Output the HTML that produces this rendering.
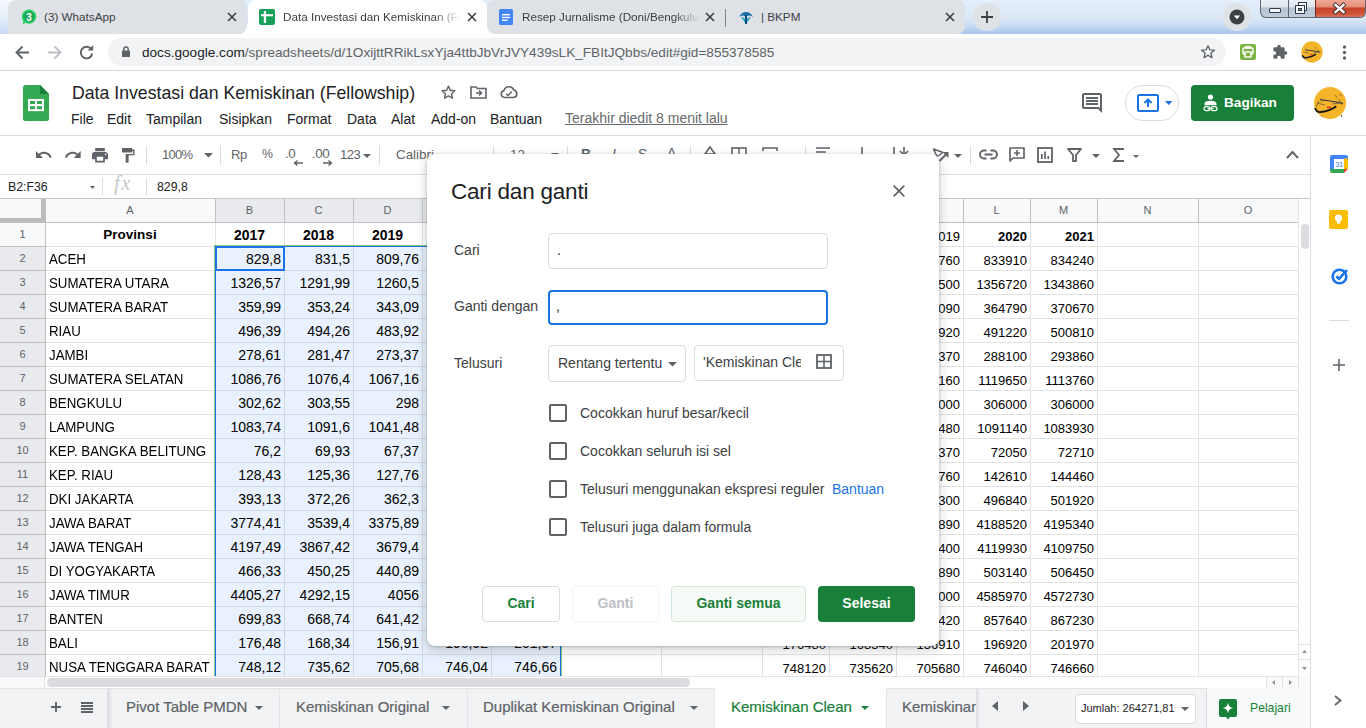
<!DOCTYPE html><html><head><meta charset="utf-8"><style>
*{box-sizing:border-box;margin:0;padding:0}
html,body{width:1366px;height:728px;overflow:hidden;background:#fff;font-family:"Liberation Sans", sans-serif;position:relative}
.a{position:absolute}
.t{position:absolute;white-space:nowrap}
svg{position:absolute;overflow:visible}
</style></head><body>
<div class="a" style="left:0;top:0;width:1366px;height:34px;background:linear-gradient(180deg,#e4eefa 0%,#dbe7f6 55%,#c9dbf3 75%,#a9c5ec 100%)"></div>
<div class="a" style="left:0;top:0;width:60px;height:34px;background:linear-gradient(180deg,#f6f9fd 0%,#e6eef8 50%,#c9dcf5 100%)"></div>
<div class="a" style="left:238px;top:24px;width:258px;height:10px;background:#fff"></div>
<div class="a" style="left:8px;top:0;width:239px;height:34px;background:#dee1e6;border-radius:8px 8px 8px 0"></div>
<div class="a" style="left:487px;top:0;width:478px;height:34px;background:#dee1e6;border-radius:8px"></div>
<div class="a" style="left:725px;top:9px;width:1px;height:18px;background:#80868b"></div>
<div class="a" style="left:248px;top:0;width:239px;height:34px;background:#fff;border-radius:8px 8px 0 0"></div>
<svg style="left:21px;top:9px" width="16" height="16" viewBox="0 0 16 16"><circle cx="8" cy="7.6" r="7.2" fill="#25d366"/><path d="M1.5 15.5 L2.6 11 L5 13.6Z" fill="#25d366"/><circle cx="8" cy="7.6" r="5.6" fill="#1fa855"/><text x="8" y="11.5" font-family="Liberation Sans" font-weight="bold" font-size="10" fill="#fff" text-anchor="middle">3</text></svg>
<div class="t" style="left:44px;top:10px;font-size:11.7px;color:#3c4043">(3) WhatsApp</div>
<svg style="left:227px;top:12px" width="10" height="10"><path d="M1 1L9 9M9 1L1 9" stroke="#3c4043" stroke-width="1.6"/></svg>
<svg style="left:259px;top:9px" width="16" height="16"><rect x="0" y="0" width="16" height="16" rx="2" fill="#15a05a"/><rect x="2" y="5.2" width="12" height="2.1" fill="#fff"/><rect x="4.8" y="2" width="2.3" height="12" fill="#fff"/></svg>
<div class="t" style="left:283px;top:10px;width:177px;overflow:hidden;font-size:11.7px;color:#3c4043;-webkit-mask-image:linear-gradient(90deg,#000 85%,transparent)">Data Investasi dan Kemiskinan (Fellowship)</div>
<svg style="left:467px;top:12px" width="10" height="10"><path d="M1 1L9 9M9 1L1 9" stroke="#3c4043" stroke-width="1.6"/></svg>
<svg style="left:498px;top:9px" width="16" height="16"><rect x="1" y="0" width="14" height="16" rx="1.5" fill="#4285f4"/><rect x="4" y="5" width="8" height="1.4" fill="#fff"/><rect x="4" y="7.8" width="8" height="1.4" fill="#fff"/><rect x="4" y="10.6" width="5.5" height="1.4" fill="#fff"/></svg>
<div class="t" style="left:522px;top:10px;width:178px;overflow:hidden;font-size:11.7px;color:#3c4043;-webkit-mask-image:linear-gradient(90deg,#000 85%,transparent)">Resep Jurnalisme (Doni/Bengkulu)</div>
<svg style="left:705px;top:12px" width="10" height="10"><path d="M1 1L9 9M9 1L1 9" stroke="#3c4043" stroke-width="1.6"/></svg>
<svg style="left:738px;top:9px" width="16" height="16"><path d="M8 3C5 3 2 5 1 8C4 6 6 6 8 8C10 6 12 6 15 8C14 5 11 3 8 3Z" fill="#1b6fa8"/><path d="M3 8C5 8 7 9 8 12C9 9 11 8 13 8L8 15Z" fill="#24a0c4"/><rect x="7" y="6" width="2" height="9" fill="#0d4f80"/></svg>
<div class="t" style="left:761px;top:10px;font-size:11.7px;color:#3c4043">| BKPM</div>
<svg style="left:945px;top:12px" width="10" height="10"><path d="M1 1L9 9M9 1L1 9" stroke="#3c4043" stroke-width="1.6"/></svg>
<div class="a" style="left:973px;top:3px;width:28px;height:28px;border-radius:14px;background:#dee1e6"></div>
<svg style="left:980px;top:10px" width="14" height="14"><path d="M7 1V13M1 7H13" stroke="#3c4043" stroke-width="1.8"/></svg>
<div class="a" style="left:1223px;top:3px;width:28px;height:28px;border-radius:14px;background:#dee1e6"></div>
<svg style="left:1229px;top:9px" width="16" height="16"><circle cx="8" cy="8" r="7.5" fill="#3c4043"/><path d="M4.8 6.5H11.2L8 10.3Z" fill="#fff"/></svg>
<div class="a" style="left:1260px;top:-2px;width:106px;height:19.5px;border:1px solid #5b6778;border-top:none;border-radius:0 0 6px 6px;background:linear-gradient(#eef2f7 0%,#e1e7ef 45%,#b9c3d2 52%,#c3ccd9 100%);overflow:hidden">
<div class="a" style="left:27px;top:0;width:1px;height:20px;background:#5b6778"></div>
<div class="a" style="left:54px;top:0;width:51px;height:20px;border-left:1px solid #6a2a1c;background:linear-gradient(#f2ad9d 0%,#e5907b 42%,#c8452b 52%,#cf553a 80%,#e0826b 100%)"></div>
</div>
<div class="a" style="left:1269px;top:8px;width:12px;height:5px;background:#f4f6f9;border:1px solid #2f3a4a;border-radius:1px"></div>
<div class="a" style="left:1298px;top:2px;width:9px;height:9px;border:1px solid #2f3a4a;background:#f4f6f9"></div>
<div class="a" style="left:1295px;top:4.5px;width:9.5px;height:9px;border:1px solid #2f3a4a;background:#f4f6f9"></div>
<div class="a" style="left:1298px;top:7.5px;width:3.5px;height:3.5px;border:1px solid #2f3a4a;background:#9aa5b5"></div>
<svg style="left:1333px;top:3px" width="13" height="11"><path d="M2.5 2L10.5 9M10.5 2L2.5 9" stroke="#3b2a2a" stroke-width="4.2" stroke-linecap="square"/><path d="M2.5 2L10.5 9M10.5 2L2.5 9" stroke="#fff" stroke-width="2.4" stroke-linecap="square"/></svg>
<div class="a" style="left:0;top:34px;width:1366px;height:36px;background:#fff"></div>
<div class="a" style="left:0;top:70px;width:1366px;height:1px;background:#d6d8db"></div>
<svg style="left:15px;top:45px" width="15" height="15"><path d="M14 7.5H2M7.5 1.5L1.5 7.5L7.5 13.5" stroke="#5f6368" stroke-width="1.9" fill="none"/></svg>
<svg style="left:47px;top:45px" width="15" height="15"><path d="M1 7.5H13M7.5 1.5L13.5 7.5L7.5 13.5" stroke="#bdc1c6" stroke-width="1.9" fill="none"/></svg>
<svg style="left:79px;top:45px" width="15" height="15"><path d="M12.3 4.2A5.8 5.8 0 1 0 13.3 8.5" stroke="#5f6368" stroke-width="1.9" fill="none"/><path d="M8.6 5.6H14.2V0Z" fill="#5f6368"/></svg>
<div class="a" style="left:108px;top:38px;width:1118px;height:28px;border-radius:14px;background:#f1f3f4"></div>
<svg style="left:122px;top:46px" width="8" height="11" viewBox="0 0 8 11"><path d="M1.8 5V3.2A2.2 2.2 0 0 1 6.2 3.2V5" stroke="#5f6368" stroke-width="1.5" fill="none"/><rect x="0" y="4.5" width="8" height="6.5" rx="0.6" fill="#5f6368"/></svg>
<div class="t" style="left:142px;top:45px;font-size:13.6px;color:#5f6368;letter-spacing:0px"><span style="color:#202124">docs.google.com</span>/spreadsheets/d/1OxijttRRikLsxYja4ttbJbVrJVY439sLK_FBItJQbbs/edit#gid=855378585</div>
<svg style="left:1200px;top:44px" width="16" height="16" viewBox="0 0 24 24"><path d="M12 2.5l2.8 6.2 6.7.6-5.1 4.5 1.5 6.6L12 16.9l-5.9 3.5 1.5-6.6-5.1-4.5 6.7-.6z" stroke="#5f6368" stroke-width="2" fill="none" stroke-linejoin="round"/></svg>
<svg style="left:1240px;top:44px" width="16" height="16"><rect width="16" height="16" rx="2" fill="#7cb342"/><rect x="3" y="4" width="10" height="6" rx="1" fill="none" stroke="#fff" stroke-width="1.4"/><rect x="5" y="8" width="6" height="5" fill="#7cb342" stroke="#fff" stroke-width="1.4"/><rect x="5" y="2" width="6" height="2.5" fill="#fff"/></svg>
<svg style="left:1272px;top:44px" width="16" height="16" viewBox="0 0 24 24"><path d="M20.5 11H19V7c0-1.1-.9-2-2-2h-4V3.5C13 2.12 11.88 1 10.5 1S8 2.12 8 3.5V5H4c-1.1 0-1.99.9-1.99 2v3.8H3.5c1.49 0 2.7 1.21 2.7 2.7s-1.21 2.7-2.7 2.7H2V20c0 1.1.9 2 2 2h3.8v-1.5c0-1.49 1.21-2.7 2.7-2.7 1.49 0 2.7 1.21 2.7 2.7V22H17c1.1 0 2-.9 2-2v-4h1.5c1.38 0 2.5-1.12 2.5-2.5S21.88 11 20.5 11z" fill="#5f6368"/></svg>
<svg style="left:1301px;top:41px" width="22" height="22" viewBox="0 0 34 34"><circle cx="17" cy="17" r="16.5" fill="#f5b52b"/><path d="M2 22C3 25 5 26.5 8 26C13 25.5 18 24 23.3 20.2" stroke="#111" stroke-width="2.2" fill="none"/><path d="M7 13.5C9 14 13 14.5 17 15C21 15.5 25 16.5 30 17.3" stroke="#3a3a4a" stroke-width="1.5" fill="none"/><path d="M7 12L9 16M4 17L12 19M19 18L27 17M26 13L29 19M22 9L24 12" stroke="#6b5a3a" stroke-width="1" fill="none"/><path d="M14 21.4H18" stroke="#d9261c" stroke-width="1.8"/></svg>
<svg style="left:1342px;top:45px" width="5" height="15"><circle cx="2.5" cy="2" r="1.7" fill="#5f6368"/><circle cx="2.5" cy="7.5" r="1.7" fill="#5f6368"/><circle cx="2.5" cy="13" r="1.7" fill="#5f6368"/></svg>
<svg style="left:23px;top:85px" width="26" height="36" viewBox="0 0 26 36"><path d="M2.5 0H17L26 9V33.5A2.5 2.5 0 0 1 23.5 36H2.5A2.5 2.5 0 0 1 0 33.5V2.5A2.5 2.5 0 0 1 2.5 0Z" fill="#34a853"/><path d="M17 0V9H26Z" fill="#188038"/><rect x="5" y="14" width="16" height="12.2" fill="#fff"/><rect x="7" y="16" width="5" height="3" fill="#34a853"/><rect x="14" y="16" width="5" height="3" fill="#34a853"/><rect x="7" y="21.2" width="5" height="3" fill="#34a853"/><rect x="14" y="21.2" width="5" height="3" fill="#34a853"/></svg>
<div class="t" style="left:72px;top:83px;font-size:17.7px;color:#202124">Data Investasi dan Kemiskinan (Fellowship)</div>
<svg style="left:440px;top:84px" width="17" height="17" viewBox="0 0 24 24"><path d="M12 3l2.6 5.9 6.4.6-4.8 4.3 1.4 6.3L12 16.8 6.4 20.1l1.4-6.3L3 9.5l6.4-.6z" stroke="#5f6368" stroke-width="2" fill="none" stroke-linejoin="round"/></svg>
<svg style="left:470px;top:85px" width="17" height="14" viewBox="0 0 17 14"><path d="M1 2H6L7.5 3.5H16V13H1Z" stroke="#5f6368" stroke-width="1.6" fill="none"/><path d="M6 8H11.5M9 5.5L11.5 8L9 10.5" stroke="#5f6368" stroke-width="1.5" fill="none"/></svg>
<svg style="left:500px;top:85px" width="18" height="14" viewBox="0 0 18 14"><path d="M4.5 12.5A3.5 3.5 0 0 1 4 5.6 5.2 5.2 0 0 1 13.8 5 3.8 3.8 0 0 1 13.5 12.5Z" stroke="#5f6368" stroke-width="1.6" fill="none"/><path d="M6 8.8L8 10.5L12 6.5" stroke="#5f6368" stroke-width="1.5" fill="none"/></svg>
<div class="t" style="left:71px;top:111px;font-size:14px;color:#202124">File</div>
<div class="t" style="left:107px;top:111px;font-size:14px;color:#202124">Edit</div>
<div class="t" style="left:146px;top:111px;font-size:14px;color:#202124">Tampilan</div>
<div class="t" style="left:219px;top:111px;font-size:14px;color:#202124">Sisipkan</div>
<div class="t" style="left:287px;top:111px;font-size:14px;color:#202124">Format</div>
<div class="t" style="left:347px;top:111px;font-size:14px;color:#202124">Data</div>
<div class="t" style="left:391px;top:111px;font-size:14px;color:#202124">Alat</div>
<div class="t" style="left:431px;top:111px;font-size:14px;color:#202124">Add-on</div>
<div class="t" style="left:490px;top:111px;font-size:14px;color:#202124">Bantuan</div>
<div class="t" style="left:565px;top:110px;font-size:14px;color:#666a6e;text-decoration:underline">Terakhir diedit 8 menit lalu</div>
<svg style="left:1082px;top:93px" width="20" height="20" viewBox="2 2 20 20"><path d="M21.99 4c0-1.1-.89-2-1.99-2H4c-1.1 0-2 .9-2 2v12c0 1.1.9 2 2 2h14l4 4-.01-18zM20 4v13.17L18.83 16H4V4h16zM6 12h12v2H6zm0-3h12v2H6zm0-3h12v2H6z" fill="#5f6368"/></svg>
<div class="a" style="left:1125px;top:85px;width:54px;height:36px;border:1px solid #dadce0;border-radius:18px;background:#fff"></div>
<svg style="left:1137px;top:94px" width="22" height="18"><rect x="1" y="1" width="20" height="16" rx="1" fill="none" stroke="#1a73e8" stroke-width="2"/><path d="M11 13V6M7.5 9L11 5.5L14.5 9" stroke="#1a73e8" stroke-width="2" fill="none"/></svg>
<svg style="left:1164.5px;top:101px" width="7.5" height="4"><path d="M0 0H7.5L3.75 4Z" fill="#1a73e8"/></svg>
<div class="a" style="left:1191px;top:85px;width:103px;height:36px;border-radius:4px;background:#188038"></div>
<svg style="left:1203px;top:94px" width="15" height="18" viewBox="0 0 15 18"><circle cx="7.5" cy="3" r="2.6" fill="#fff"/><path d="M1.5 11.2V9.8C1.5 7.5 5 6.8 7.5 6.8S13.5 7.5 13.5 9.8V11.2Z" fill="#fff"/><rect x="1" y="12.6" width="6" height="4" rx="2" fill="none" stroke="#fff" stroke-width="1.2"/><rect x="8" y="12.6" width="6" height="4" rx="2" fill="none" stroke="#fff" stroke-width="1.2"/><path d="M4.5 14.6H10.5" stroke="#fff" stroke-width="1.2"/></svg>
<div class="t" style="left:1224px;top:95px;font-size:13.6px;font-weight:bold;color:#fff">Bagikan</div>
<svg style="left:1313px;top:86px" width="34" height="34" viewBox="0 0 34 34"><circle cx="17" cy="17" r="16" fill="#f5b52b"/><path d="M2 22C3 25 5 26.5 8 26C13 25.5 18 24 23.3 20.2" stroke="#111" stroke-width="1.9" fill="none"/><path d="M7 13.5C9 14 13 14.5 17 15C21 15.5 25 16.5 30 17.3" stroke="#3a3a4a" stroke-width="1.2" fill="none"/><path d="M7 12L9 16M4 17L12 19M19 18L27 17M26 13L29 19M22 9L24 12M27 8L28 10M6 15L3 21" stroke="#6b5a3a" stroke-width="0.8" fill="none"/><path d="M14 21.4H18" stroke="#d9261c" stroke-width="1.5"/><circle cx="28.5" cy="30" r="0.7" fill="#222"/><circle cx="9" cy="30.5" r="0.6" fill="#c33"/></svg>
<div class="a" style="left:0;top:135px;width:1366px;height:1px;background:#dadce0"></div>
<div class="a" style="left:0;top:174px;width:1310px;height:1px;background:#dadce0"></div>
<div class="a" style="left:1310px;top:135px;width:1px;height:593px;background:#dadce0"></div>
<svg style="left:36px;top:151px" width="15.4" height="6.9" viewBox="2 7 20.1 9"><path d="M12.5 8c-2.65 0-5.05.99-6.9 2.6L2 7v9h9l-3.62-3.62c1.39-1.16 3.16-1.88 5.12-1.88 3.54 0 6.55 2.31 7.6 5.5l2.37-.78C21.08 11.03 17.15 8 12.5 8z" fill="#5f6368"/></svg>
<svg style="left:64.5px;top:151px" width="15.7" height="6.9" viewBox="1.54 7 20.46 9"><path d="M18.4 10.6C16.55 8.99 14.15 8 11.5 8c-4.65 0-8.58 3.03-9.960 7.22L3.9 16c1.05-3.19 4.05-5.5 7.6-5.5 1.95 0 3.73.72 5.12 1.88L13 16h9V7l-3.6 3.6z" fill="#5f6368"/></svg>
<svg style="left:92px;top:147.6px" width="16" height="14.4" viewBox="2 3 20 18"><path d="M19 8H5c-1.66 0-3 1.34-3 3v6h4v4h12v-4h4v-6c0-1.66-1.340-3-3-3zm-3 11H8v-5h8v5zm3-7c-.55 0-1-.45-1-1s.45-1 1-1 1 .45 1 1-.45 1-1 1zm-1-9H6v4h12V3z" fill="#5f6368"/></svg>
<svg style="left:122px;top:147.5px" width="12.5" height="14.7" viewBox="4 2 17 20"><path d="M18 4V3c0-.55-.45-1-1-1H5c-.55 0-1 .45-1 1v4c0 .55.45 1 1 1h12c.55 0 1-.45 1-1V6h1v4H9v11c0 .55.45 1 1 1h2c.55 0 1-.45 1-1v-9h8V4h-3z" fill="#5f6368"/></svg>
<div class="a" style="left:146px;top:146px;width:1px;height:19px;background:#dadce0"></div>
<div class="a" style="left:220px;top:146px;width:1px;height:19px;background:#dadce0"></div>
<div class="a" style="left:379px;top:146px;width:1px;height:19px;background:#dadce0"></div>
<div class="a" style="left:493px;top:146px;width:1px;height:19px;background:#dadce0"></div>
<div class="a" style="left:567px;top:146px;width:1px;height:19px;background:#dadce0"></div>
<div class="a" style="left:690px;top:146px;width:1px;height:19px;background:#dadce0"></div>
<div class="a" style="left:805px;top:146px;width:1px;height:19px;background:#dadce0"></div>
<div class="a" style="left:970px;top:146px;width:1px;height:19px;background:#dadce0"></div>
<div class="t" style="left:162px;top:147px;font-size:13px;letter-spacing:-0.7px;color:#5f6368">100%</div>
<svg style="left:204px;top:153px" width="9" height="5"><path d="M0 0H9L4.5 4.5Z" fill="#5f6368"/></svg>
<div class="t" style="left:231px;top:147px;font-size:13px;letter-spacing:-0.3px;color:#5f6368">Rp</div>
<div class="t" style="left:262px;top:147px;font-size:12.3px;color:#5f6368">%</div>
<div class="t" style="left:285px;top:146px;font-size:13.4px;color:#5f6368;letter-spacing:-0.5px">.0</div>
<svg style="left:293px;top:160px" width="10" height="6"><path d="M10 3H2M4.5 0.5L1.5 3L4.5 5.5" stroke="#5f6368" stroke-width="1.4" fill="none"/></svg>
<div class="t" style="left:312px;top:146px;font-size:13.4px;color:#5f6368;letter-spacing:-0.5px">.00</div>
<svg style="left:323px;top:160px" width="10" height="6"><path d="M0 3H8M5.5 0.5L8.5 3L5.5 5.5" stroke="#5f6368" stroke-width="1.4" fill="none"/></svg>
<div class="t" style="left:340px;top:147px;font-size:13px;letter-spacing:-0.5px;color:#5f6368">123</div>
<svg style="left:363px;top:154px" width="8" height="4"><path d="M0 0H8L4 4Z" fill="#5f6368"/></svg>
<div class="t" style="left:396px;top:147px;font-size:13.4px;color:#5f6368">Calibri</div>
<div class="t" style="left:510px;top:147px;font-size:13.4px;color:#5f6368">12</div>
<svg style="left:551px;top:153px" width="8" height="4"><path d="M0 0H8L4 4Z" fill="#5f6368"/></svg>
<div class="t" style="left:581px;top:146px;font-size:14px;font-weight:bold;color:#5f6368">B</div>
<div class="t" style="left:612px;top:146px;font-size:14px;font-style:italic;color:#5f6368">I</div>
<div class="t" style="left:638px;top:146px;font-size:14px;color:#5f6368;text-decoration:line-through">S</div>
<div class="t" style="left:667px;top:145px;font-size:14px;color:#5f6368">A</div>
<svg style="left:931px;top:147px" width="20" height="16" viewBox="0 0 20 16"><path d="M2.5 2L12 5.5L6 9.5Z" stroke="#5f6368" stroke-width="1.5" fill="none" stroke-linejoin="round"/><path d="M8.5 14L15.5 7" stroke="#5f6368" stroke-width="1.9"/><path d="M11.5 5H17.5V11Z" fill="#5f6368"/></svg>
<svg style="left:954px;top:154px" width="8" height="4"><path d="M0 0H8L4 4Z" fill="#5f6368"/></svg>
<svg style="left:979px;top:149px" width="19" height="11" viewBox="0 0 19 11"><path d="M7.5 1.5H5A4 4 0 0 0 5 9.5H7.5M11.5 1.5H14A4 4 0 0 1 14 9.5H11.5M5.5 5.5H13.5" stroke="#5f6368" stroke-width="1.9" fill="none"/></svg>
<svg style="left:1009px;top:147px" width="16" height="15" viewBox="0 0 16 15"><path d="M1 1H15V11H4L1 14Z" stroke="#5f6368" stroke-width="1.7" fill="none" stroke-linejoin="round"/><path d="M8 3V9M5 6H11" stroke="#5f6368" stroke-width="1.6"/></svg>
<svg style="left:1037px;top:147px" width="16" height="16" viewBox="0 0 16 16"><rect x="1" y="1" width="14" height="14" stroke="#5f6368" stroke-width="1.8" fill="none"/><path d="M4.8 12V7M8 12V4.5M11.2 12V9" stroke="#5f6368" stroke-width="1.7"/></svg>
<svg style="left:1067px;top:148px" width="15" height="14" viewBox="0 0 15 14"><path d="M1 1H14L9 7V13H6V7Z" stroke="#5f6368" stroke-width="1.8" fill="none" stroke-linejoin="round"/></svg>
<svg style="left:1092px;top:154px" width="8" height="4"><path d="M0 0H8L4 4Z" fill="#5f6368"/></svg>
<svg style="left:1113px;top:148px" width="11" height="14" viewBox="0 0 11 14"><path d="M11 1H1L6 7L1 13H11" stroke="#5f6368" stroke-width="1.8" fill="none"/></svg>
<svg style="left:1133px;top:155px" width="6" height="3"><path d="M0 0H6L3 3Z" fill="#5f6368"/></svg>
<svg style="left:1286px;top:150px" width="13" height="9" viewBox="0 0 13 9"><path d="M1 8L6.5 2L12 8" stroke="#5f6368" stroke-width="2" fill="none"/></svg>
<svg style="left:703px;top:146px" width="14" height="16"><path d="M7 1L12 8H2Z" stroke="#5f6368" stroke-width="1.6" fill="none"/></svg>
<svg style="left:731px;top:147px" width="16" height="16"><rect x="1" y="1" width="14" height="14" stroke="#5f6368" stroke-width="1.6" fill="none"/><path d="M8 1V15M1 8H15" stroke="#5f6368" stroke-width="1.4"/></svg>
<svg style="left:762px;top:147px" width="16" height="16"><path d="M1 4V1H15V4M1 12V15H15V12" stroke="#5f6368" stroke-width="1.6" fill="none"/><path d="M1 8H15" stroke="#5f6368" stroke-width="1.4" stroke-dasharray="2 2"/></svg>
<svg style="left:815px;top:147px" width="16" height="14"><path d="M1 1H15M1 5H11M1 9H15" stroke="#5f6368" stroke-width="1.6"/></svg>
<svg style="left:859px;top:146px" width="6" height="16"><path d="M3 1V13" stroke="#5f6368" stroke-width="1.6"/></svg>
<svg style="left:892px;top:146px" width="16" height="16"><path d="M2 1V13M12 1V9M8 5L12 9L16 5" stroke="#5f6368" stroke-width="1.6" fill="none"/></svg>
<div class="a" style="left:0;top:175px;width:1310px;height:23px;background:#fff"></div>
<div class="t" style="left:8px;top:180px;font-size:12.3px;color:#202124">B2:F36</div>
<svg style="left:90px;top:186px" width="5" height="3"><path d="M0 0H5L2.5 3Z" fill="#5f6368"/></svg>
<div class="a" style="left:102px;top:178px;width:1px;height:17px;background:#dadce0"></div>
<div class="a" style="left:146px;top:178px;width:1px;height:17px;background:#dadce0"></div>
<div class="t" style="left:114px;top:172px;font-size:20.5px;font-style:italic;font-family:'Liberation Serif',serif;letter-spacing:1.5px;color:#c4c7c9">fx</div>
<div class="t" style="left:157px;top:180px;font-size:12.3px;color:#202124">829,8</div>
<div class="a" style="left:0;top:198px;width:1310px;height:1px;background:#c7c7c7"></div>
<div class="a" style="left:0;top:199px;width:1298px;height:23px;background:#f8f9fa"></div>
<div class="a" style="left:215px;top:199px;width:345px;height:23px;background:#e8eaed"></div>
<div class="a" style="left:0;top:223px;width:45px;height:453px;background:#f8f9fa"></div>
<div class="a" style="left:0;top:247px;width:45px;height:429px;background:#e8eaed"></div>
<div class="a" style="left:45px;top:222px;width:1253px;height:1px;background:#e2e3e3"></div>
<div class="a" style="left:0;top:222px;width:45px;height:1px;background:#c0c0c0"></div>
<div class="a" style="left:45px;top:246px;width:1253px;height:1px;background:#e2e3e3"></div>
<div class="a" style="left:0;top:246px;width:45px;height:1px;background:#c0c0c0"></div>
<div class="a" style="left:45px;top:270px;width:1253px;height:1px;background:#e2e3e3"></div>
<div class="a" style="left:0;top:270px;width:45px;height:1px;background:#c0c0c0"></div>
<div class="a" style="left:45px;top:294px;width:1253px;height:1px;background:#e2e3e3"></div>
<div class="a" style="left:0;top:294px;width:45px;height:1px;background:#c0c0c0"></div>
<div class="a" style="left:45px;top:318px;width:1253px;height:1px;background:#e2e3e3"></div>
<div class="a" style="left:0;top:318px;width:45px;height:1px;background:#c0c0c0"></div>
<div class="a" style="left:45px;top:342px;width:1253px;height:1px;background:#e2e3e3"></div>
<div class="a" style="left:0;top:342px;width:45px;height:1px;background:#c0c0c0"></div>
<div class="a" style="left:45px;top:366px;width:1253px;height:1px;background:#e2e3e3"></div>
<div class="a" style="left:0;top:366px;width:45px;height:1px;background:#c0c0c0"></div>
<div class="a" style="left:45px;top:390px;width:1253px;height:1px;background:#e2e3e3"></div>
<div class="a" style="left:0;top:390px;width:45px;height:1px;background:#c0c0c0"></div>
<div class="a" style="left:45px;top:414px;width:1253px;height:1px;background:#e2e3e3"></div>
<div class="a" style="left:0;top:414px;width:45px;height:1px;background:#c0c0c0"></div>
<div class="a" style="left:45px;top:438px;width:1253px;height:1px;background:#e2e3e3"></div>
<div class="a" style="left:0;top:438px;width:45px;height:1px;background:#c0c0c0"></div>
<div class="a" style="left:45px;top:462px;width:1253px;height:1px;background:#e2e3e3"></div>
<div class="a" style="left:0;top:462px;width:45px;height:1px;background:#c0c0c0"></div>
<div class="a" style="left:45px;top:486px;width:1253px;height:1px;background:#e2e3e3"></div>
<div class="a" style="left:0;top:486px;width:45px;height:1px;background:#c0c0c0"></div>
<div class="a" style="left:45px;top:510px;width:1253px;height:1px;background:#e2e3e3"></div>
<div class="a" style="left:0;top:510px;width:45px;height:1px;background:#c0c0c0"></div>
<div class="a" style="left:45px;top:534px;width:1253px;height:1px;background:#e2e3e3"></div>
<div class="a" style="left:0;top:534px;width:45px;height:1px;background:#c0c0c0"></div>
<div class="a" style="left:45px;top:558px;width:1253px;height:1px;background:#e2e3e3"></div>
<div class="a" style="left:0;top:558px;width:45px;height:1px;background:#c0c0c0"></div>
<div class="a" style="left:45px;top:582px;width:1253px;height:1px;background:#e2e3e3"></div>
<div class="a" style="left:0;top:582px;width:45px;height:1px;background:#c0c0c0"></div>
<div class="a" style="left:45px;top:606px;width:1253px;height:1px;background:#e2e3e3"></div>
<div class="a" style="left:0;top:606px;width:45px;height:1px;background:#c0c0c0"></div>
<div class="a" style="left:45px;top:630px;width:1253px;height:1px;background:#e2e3e3"></div>
<div class="a" style="left:0;top:630px;width:45px;height:1px;background:#c0c0c0"></div>
<div class="a" style="left:45px;top:654px;width:1253px;height:1px;background:#e2e3e3"></div>
<div class="a" style="left:0;top:654px;width:45px;height:1px;background:#c0c0c0"></div>
<div class="a" style="left:45px;top:222px;width:1253px;height:1px;background:#c0c0c0"></div>
<div class="a" style="left:0;top:676px;width:1298px;height:1px;background:#e2e3e3"></div>
<div class="a" style="left:215px;top:223px;width:1px;height:453px;background:#e2e3e3"></div>
<div class="a" style="left:215px;top:199px;width:1px;height:23px;background:#c0c0c0"></div>
<div class="a" style="left:284px;top:223px;width:1px;height:453px;background:#e2e3e3"></div>
<div class="a" style="left:284px;top:199px;width:1px;height:23px;background:#c0c0c0"></div>
<div class="a" style="left:353px;top:223px;width:1px;height:453px;background:#e2e3e3"></div>
<div class="a" style="left:353px;top:199px;width:1px;height:23px;background:#c0c0c0"></div>
<div class="a" style="left:422px;top:223px;width:1px;height:453px;background:#e2e3e3"></div>
<div class="a" style="left:422px;top:199px;width:1px;height:23px;background:#c0c0c0"></div>
<div class="a" style="left:491px;top:223px;width:1px;height:453px;background:#e2e3e3"></div>
<div class="a" style="left:491px;top:199px;width:1px;height:23px;background:#c0c0c0"></div>
<div class="a" style="left:560px;top:223px;width:1px;height:453px;background:#e2e3e3"></div>
<div class="a" style="left:560px;top:199px;width:1px;height:23px;background:#c0c0c0"></div>
<div class="a" style="left:661px;top:223px;width:1px;height:453px;background:#e2e3e3"></div>
<div class="a" style="left:661px;top:199px;width:1px;height:23px;background:#c0c0c0"></div>
<div class="a" style="left:762px;top:223px;width:1px;height:453px;background:#e2e3e3"></div>
<div class="a" style="left:762px;top:199px;width:1px;height:23px;background:#c0c0c0"></div>
<div class="a" style="left:829px;top:223px;width:1px;height:453px;background:#e2e3e3"></div>
<div class="a" style="left:829px;top:199px;width:1px;height:23px;background:#c0c0c0"></div>
<div class="a" style="left:896px;top:223px;width:1px;height:453px;background:#e2e3e3"></div>
<div class="a" style="left:896px;top:199px;width:1px;height:23px;background:#c0c0c0"></div>
<div class="a" style="left:963px;top:223px;width:1px;height:453px;background:#e2e3e3"></div>
<div class="a" style="left:963px;top:199px;width:1px;height:23px;background:#c0c0c0"></div>
<div class="a" style="left:1030px;top:223px;width:1px;height:453px;background:#e2e3e3"></div>
<div class="a" style="left:1030px;top:199px;width:1px;height:23px;background:#c0c0c0"></div>
<div class="a" style="left:1097px;top:223px;width:1px;height:453px;background:#e2e3e3"></div>
<div class="a" style="left:1097px;top:199px;width:1px;height:23px;background:#c0c0c0"></div>
<div class="a" style="left:1198px;top:223px;width:1px;height:453px;background:#e2e3e3"></div>
<div class="a" style="left:1198px;top:199px;width:1px;height:23px;background:#c0c0c0"></div>
<div class="a" style="left:1298px;top:223px;width:1px;height:453px;background:#e2e3e3"></div>
<div class="a" style="left:1298px;top:199px;width:1px;height:23px;background:#c0c0c0"></div>
<div class="a" style="left:45px;top:199px;width:1px;height:477px;background:#c0c0c0"></div>
<div class="a" style="left:215px;top:246px;width:345px;height:430px;background:rgba(26,115,232,0.1)"></div>
<div class="a" style="left:41px;top:199px;width:4px;height:23px;background:#bdbdbd"></div>
<div class="a" style="left:0;top:218px;width:45px;height:4px;background:#bdbdbd"></div>
<div class="t" style="left:45px;top:204px;width:170px;text-align:center;font-size:11px;color:#5f6368">A</div>
<div class="t" style="left:215px;top:204px;width:69px;text-align:center;font-size:11px;color:#5f6368">B</div>
<div class="t" style="left:284px;top:204px;width:69px;text-align:center;font-size:11px;color:#5f6368">C</div>
<div class="t" style="left:353px;top:204px;width:69px;text-align:center;font-size:11px;color:#5f6368">D</div>
<div class="t" style="left:422px;top:204px;width:69px;text-align:center;font-size:11px;color:#5f6368">E</div>
<div class="t" style="left:491px;top:204px;width:69px;text-align:center;font-size:11px;color:#5f6368">F</div>
<div class="t" style="left:560px;top:204px;width:101px;text-align:center;font-size:11px;color:#5f6368">G</div>
<div class="t" style="left:661px;top:204px;width:101px;text-align:center;font-size:11px;color:#5f6368">H</div>
<div class="t" style="left:762px;top:204px;width:67px;text-align:center;font-size:11px;color:#5f6368">I</div>
<div class="t" style="left:829px;top:204px;width:67px;text-align:center;font-size:11px;color:#5f6368">J</div>
<div class="t" style="left:896px;top:204px;width:67px;text-align:center;font-size:11px;color:#5f6368">K</div>
<div class="t" style="left:963px;top:204px;width:67px;text-align:center;font-size:11px;color:#5f6368">L</div>
<div class="t" style="left:1030px;top:204px;width:67px;text-align:center;font-size:11px;color:#5f6368">M</div>
<div class="t" style="left:1097px;top:204px;width:101px;text-align:center;font-size:11px;color:#5f6368">N</div>
<div class="t" style="left:1198px;top:204px;width:100px;text-align:center;font-size:11px;color:#5f6368">O</div>
<div class="t" style="left:0;top:228px;width:45px;text-align:center;font-size:11px;color:#5f6368">1</div>
<div class="t" style="left:0;top:252px;width:45px;text-align:center;font-size:11px;color:#5f6368">2</div>
<div class="t" style="left:0;top:276px;width:45px;text-align:center;font-size:11px;color:#5f6368">3</div>
<div class="t" style="left:0;top:300px;width:45px;text-align:center;font-size:11px;color:#5f6368">4</div>
<div class="t" style="left:0;top:324px;width:45px;text-align:center;font-size:11px;color:#5f6368">5</div>
<div class="t" style="left:0;top:348px;width:45px;text-align:center;font-size:11px;color:#5f6368">6</div>
<div class="t" style="left:0;top:372px;width:45px;text-align:center;font-size:11px;color:#5f6368">7</div>
<div class="t" style="left:0;top:396px;width:45px;text-align:center;font-size:11px;color:#5f6368">8</div>
<div class="t" style="left:0;top:420px;width:45px;text-align:center;font-size:11px;color:#5f6368">9</div>
<div class="t" style="left:0;top:444px;width:45px;text-align:center;font-size:11px;color:#5f6368">10</div>
<div class="t" style="left:0;top:468px;width:45px;text-align:center;font-size:11px;color:#5f6368">11</div>
<div class="t" style="left:0;top:492px;width:45px;text-align:center;font-size:11px;color:#5f6368">12</div>
<div class="t" style="left:0;top:516px;width:45px;text-align:center;font-size:11px;color:#5f6368">13</div>
<div class="t" style="left:0;top:540px;width:45px;text-align:center;font-size:11px;color:#5f6368">14</div>
<div class="t" style="left:0;top:564px;width:45px;text-align:center;font-size:11px;color:#5f6368">15</div>
<div class="t" style="left:0;top:588px;width:45px;text-align:center;font-size:11px;color:#5f6368">16</div>
<div class="t" style="left:0;top:612px;width:45px;text-align:center;font-size:11px;color:#5f6368">17</div>
<div class="t" style="left:0;top:636px;width:45px;text-align:center;font-size:11px;color:#5f6368">18</div>
<div class="t" style="left:0;top:660px;width:45px;text-align:center;font-size:11px;color:#5f6368">19</div>
<div class="t" style="left:45px;top:227px;width:170px;text-align:center;font-size:13.5px;font-weight:bold;color:#000">Provinsi</div>
<div class="t" style="left:215px;top:227px;width:69px;text-align:center;font-size:14px;font-weight:bold;color:#000">2017</div>
<div class="t" style="left:284px;top:227px;width:69px;text-align:center;font-size:14px;font-weight:bold;color:#000">2018</div>
<div class="t" style="left:353px;top:227px;width:69px;text-align:center;font-size:14px;font-weight:bold;color:#000">2019</div>
<div class="t" style="left:422px;top:227px;width:69px;text-align:center;font-size:14px;font-weight:bold;color:#000">2020</div>
<div class="t" style="left:491px;top:227px;width:69px;text-align:center;font-size:14px;font-weight:bold;color:#000">2021</div>
<div class="t" style="left:762px;top:228.5px;width:64px;text-align:right;font-size:13px;color:#000">2017</div>
<div class="t" style="left:829px;top:228.5px;width:64px;text-align:right;font-size:13px;color:#000">2018</div>
<div class="t" style="left:896px;top:228.5px;width:64px;text-align:right;font-size:13px;color:#000">2019</div>
<div class="t" style="left:963px;top:228.5px;width:64px;text-align:right;font-size:13px;font-weight:bold;color:#000">2020</div>
<div class="t" style="left:1030px;top:228.5px;width:64px;text-align:right;font-size:13px;font-weight:bold;color:#000">2021</div>
<div class="t" style="left:49px;top:252px;font-size:13.3px;color:#000;transform:scaleY(1.13);transform-origin:0 12px">ACEH</div>
<div class="t" style="left:215px;top:251px;width:66px;text-align:right;font-size:14px;color:#000">829,8</div>
<div class="t" style="left:284px;top:251px;width:66px;text-align:right;font-size:14px;color:#000">831,5</div>
<div class="t" style="left:353px;top:251px;width:66px;text-align:right;font-size:14px;color:#000">809,76</div>
<div class="t" style="left:422px;top:251px;width:66px;text-align:right;font-size:14px;color:#000">833,91</div>
<div class="t" style="left:491px;top:251px;width:66px;text-align:right;font-size:14px;color:#000">834,24</div>
<div class="t" style="left:762px;top:252.5px;width:64px;text-align:right;font-size:13px;color:#000">829800</div>
<div class="t" style="left:829px;top:252.5px;width:64px;text-align:right;font-size:13px;color:#000">831500</div>
<div class="t" style="left:896px;top:252.5px;width:64px;text-align:right;font-size:13px;color:#000">809760</div>
<div class="t" style="left:963px;top:252.5px;width:64px;text-align:right;font-size:13px;color:#000">833910</div>
<div class="t" style="left:1030px;top:252.5px;width:64px;text-align:right;font-size:13px;color:#000">834240</div>
<div class="t" style="left:49px;top:276px;font-size:13.3px;color:#000;transform:scaleY(1.13);transform-origin:0 12px">SUMATERA UTARA</div>
<div class="t" style="left:215px;top:275px;width:66px;text-align:right;font-size:14px;color:#000">1326,57</div>
<div class="t" style="left:284px;top:275px;width:66px;text-align:right;font-size:14px;color:#000">1291,99</div>
<div class="t" style="left:353px;top:275px;width:66px;text-align:right;font-size:14px;color:#000">1260,5</div>
<div class="t" style="left:422px;top:275px;width:66px;text-align:right;font-size:14px;color:#000">1356,72</div>
<div class="t" style="left:491px;top:275px;width:66px;text-align:right;font-size:14px;color:#000">1343,86</div>
<div class="t" style="left:762px;top:276.5px;width:64px;text-align:right;font-size:13px;color:#000">1326570</div>
<div class="t" style="left:829px;top:276.5px;width:64px;text-align:right;font-size:13px;color:#000">1291990</div>
<div class="t" style="left:896px;top:276.5px;width:64px;text-align:right;font-size:13px;color:#000">1260500</div>
<div class="t" style="left:963px;top:276.5px;width:64px;text-align:right;font-size:13px;color:#000">1356720</div>
<div class="t" style="left:1030px;top:276.5px;width:64px;text-align:right;font-size:13px;color:#000">1343860</div>
<div class="t" style="left:49px;top:300px;font-size:13.3px;color:#000;transform:scaleY(1.13);transform-origin:0 12px">SUMATERA BARAT</div>
<div class="t" style="left:215px;top:299px;width:66px;text-align:right;font-size:14px;color:#000">359,99</div>
<div class="t" style="left:284px;top:299px;width:66px;text-align:right;font-size:14px;color:#000">353,24</div>
<div class="t" style="left:353px;top:299px;width:66px;text-align:right;font-size:14px;color:#000">343,09</div>
<div class="t" style="left:422px;top:299px;width:66px;text-align:right;font-size:14px;color:#000">364,79</div>
<div class="t" style="left:491px;top:299px;width:66px;text-align:right;font-size:14px;color:#000">370,67</div>
<div class="t" style="left:762px;top:300.5px;width:64px;text-align:right;font-size:13px;color:#000">359990</div>
<div class="t" style="left:829px;top:300.5px;width:64px;text-align:right;font-size:13px;color:#000">353240</div>
<div class="t" style="left:896px;top:300.5px;width:64px;text-align:right;font-size:13px;color:#000">343090</div>
<div class="t" style="left:963px;top:300.5px;width:64px;text-align:right;font-size:13px;color:#000">364790</div>
<div class="t" style="left:1030px;top:300.5px;width:64px;text-align:right;font-size:13px;color:#000">370670</div>
<div class="t" style="left:49px;top:324px;font-size:13.3px;color:#000;transform:scaleY(1.13);transform-origin:0 12px">RIAU</div>
<div class="t" style="left:215px;top:323px;width:66px;text-align:right;font-size:14px;color:#000">496,39</div>
<div class="t" style="left:284px;top:323px;width:66px;text-align:right;font-size:14px;color:#000">494,26</div>
<div class="t" style="left:353px;top:323px;width:66px;text-align:right;font-size:14px;color:#000">483,92</div>
<div class="t" style="left:422px;top:323px;width:66px;text-align:right;font-size:14px;color:#000">491,22</div>
<div class="t" style="left:491px;top:323px;width:66px;text-align:right;font-size:14px;color:#000">500,81</div>
<div class="t" style="left:762px;top:324.5px;width:64px;text-align:right;font-size:13px;color:#000">496390</div>
<div class="t" style="left:829px;top:324.5px;width:64px;text-align:right;font-size:13px;color:#000">494260</div>
<div class="t" style="left:896px;top:324.5px;width:64px;text-align:right;font-size:13px;color:#000">483920</div>
<div class="t" style="left:963px;top:324.5px;width:64px;text-align:right;font-size:13px;color:#000">491220</div>
<div class="t" style="left:1030px;top:324.5px;width:64px;text-align:right;font-size:13px;color:#000">500810</div>
<div class="t" style="left:49px;top:348px;font-size:13.3px;color:#000;transform:scaleY(1.13);transform-origin:0 12px">JAMBI</div>
<div class="t" style="left:215px;top:347px;width:66px;text-align:right;font-size:14px;color:#000">278,61</div>
<div class="t" style="left:284px;top:347px;width:66px;text-align:right;font-size:14px;color:#000">281,47</div>
<div class="t" style="left:353px;top:347px;width:66px;text-align:right;font-size:14px;color:#000">273,37</div>
<div class="t" style="left:422px;top:347px;width:66px;text-align:right;font-size:14px;color:#000">288,1</div>
<div class="t" style="left:491px;top:347px;width:66px;text-align:right;font-size:14px;color:#000">293,86</div>
<div class="t" style="left:762px;top:348.5px;width:64px;text-align:right;font-size:13px;color:#000">278610</div>
<div class="t" style="left:829px;top:348.5px;width:64px;text-align:right;font-size:13px;color:#000">281470</div>
<div class="t" style="left:896px;top:348.5px;width:64px;text-align:right;font-size:13px;color:#000">273370</div>
<div class="t" style="left:963px;top:348.5px;width:64px;text-align:right;font-size:13px;color:#000">288100</div>
<div class="t" style="left:1030px;top:348.5px;width:64px;text-align:right;font-size:13px;color:#000">293860</div>
<div class="t" style="left:49px;top:372px;font-size:13.3px;color:#000;transform:scaleY(1.13);transform-origin:0 12px">SUMATERA SELATAN</div>
<div class="t" style="left:215px;top:371px;width:66px;text-align:right;font-size:14px;color:#000">1086,76</div>
<div class="t" style="left:284px;top:371px;width:66px;text-align:right;font-size:14px;color:#000">1076,4</div>
<div class="t" style="left:353px;top:371px;width:66px;text-align:right;font-size:14px;color:#000">1067,16</div>
<div class="t" style="left:422px;top:371px;width:66px;text-align:right;font-size:14px;color:#000">1119,65</div>
<div class="t" style="left:491px;top:371px;width:66px;text-align:right;font-size:14px;color:#000">1113,76</div>
<div class="t" style="left:762px;top:372.5px;width:64px;text-align:right;font-size:13px;color:#000">1086760</div>
<div class="t" style="left:829px;top:372.5px;width:64px;text-align:right;font-size:13px;color:#000">1076400</div>
<div class="t" style="left:896px;top:372.5px;width:64px;text-align:right;font-size:13px;color:#000">1067160</div>
<div class="t" style="left:963px;top:372.5px;width:64px;text-align:right;font-size:13px;color:#000">1119650</div>
<div class="t" style="left:1030px;top:372.5px;width:64px;text-align:right;font-size:13px;color:#000">1113760</div>
<div class="t" style="left:49px;top:396px;font-size:13.3px;color:#000;transform:scaleY(1.13);transform-origin:0 12px">BENGKULU</div>
<div class="t" style="left:215px;top:395px;width:66px;text-align:right;font-size:14px;color:#000">302,62</div>
<div class="t" style="left:284px;top:395px;width:66px;text-align:right;font-size:14px;color:#000">303,55</div>
<div class="t" style="left:353px;top:395px;width:66px;text-align:right;font-size:14px;color:#000">298</div>
<div class="t" style="left:422px;top:395px;width:66px;text-align:right;font-size:14px;color:#000">306</div>
<div class="t" style="left:491px;top:395px;width:66px;text-align:right;font-size:14px;color:#000">306</div>
<div class="t" style="left:762px;top:396.5px;width:64px;text-align:right;font-size:13px;color:#000">302620</div>
<div class="t" style="left:829px;top:396.5px;width:64px;text-align:right;font-size:13px;color:#000">303550</div>
<div class="t" style="left:896px;top:396.5px;width:64px;text-align:right;font-size:13px;color:#000">298000</div>
<div class="t" style="left:963px;top:396.5px;width:64px;text-align:right;font-size:13px;color:#000">306000</div>
<div class="t" style="left:1030px;top:396.5px;width:64px;text-align:right;font-size:13px;color:#000">306000</div>
<div class="t" style="left:49px;top:420px;font-size:13.3px;color:#000;transform:scaleY(1.13);transform-origin:0 12px">LAMPUNG</div>
<div class="t" style="left:215px;top:419px;width:66px;text-align:right;font-size:14px;color:#000">1083,74</div>
<div class="t" style="left:284px;top:419px;width:66px;text-align:right;font-size:14px;color:#000">1091,6</div>
<div class="t" style="left:353px;top:419px;width:66px;text-align:right;font-size:14px;color:#000">1041,48</div>
<div class="t" style="left:422px;top:419px;width:66px;text-align:right;font-size:14px;color:#000">1091,14</div>
<div class="t" style="left:491px;top:419px;width:66px;text-align:right;font-size:14px;color:#000">1083,93</div>
<div class="t" style="left:762px;top:420.5px;width:64px;text-align:right;font-size:13px;color:#000">1083740</div>
<div class="t" style="left:829px;top:420.5px;width:64px;text-align:right;font-size:13px;color:#000">1091600</div>
<div class="t" style="left:896px;top:420.5px;width:64px;text-align:right;font-size:13px;color:#000">1041480</div>
<div class="t" style="left:963px;top:420.5px;width:64px;text-align:right;font-size:13px;color:#000">1091140</div>
<div class="t" style="left:1030px;top:420.5px;width:64px;text-align:right;font-size:13px;color:#000">1083930</div>
<div class="t" style="left:49px;top:444px;font-size:13.3px;color:#000;transform:scaleY(1.13);transform-origin:0 12px">KEP. BANGKA BELITUNG</div>
<div class="t" style="left:215px;top:443px;width:66px;text-align:right;font-size:14px;color:#000">76,2</div>
<div class="t" style="left:284px;top:443px;width:66px;text-align:right;font-size:14px;color:#000">69,93</div>
<div class="t" style="left:353px;top:443px;width:66px;text-align:right;font-size:14px;color:#000">67,37</div>
<div class="t" style="left:422px;top:443px;width:66px;text-align:right;font-size:14px;color:#000">72,05</div>
<div class="t" style="left:491px;top:443px;width:66px;text-align:right;font-size:14px;color:#000">72,71</div>
<div class="t" style="left:762px;top:444.5px;width:64px;text-align:right;font-size:13px;color:#000">76200</div>
<div class="t" style="left:829px;top:444.5px;width:64px;text-align:right;font-size:13px;color:#000">69930</div>
<div class="t" style="left:896px;top:444.5px;width:64px;text-align:right;font-size:13px;color:#000">67370</div>
<div class="t" style="left:963px;top:444.5px;width:64px;text-align:right;font-size:13px;color:#000">72050</div>
<div class="t" style="left:1030px;top:444.5px;width:64px;text-align:right;font-size:13px;color:#000">72710</div>
<div class="t" style="left:49px;top:468px;font-size:13.3px;color:#000;transform:scaleY(1.13);transform-origin:0 12px">KEP. RIAU</div>
<div class="t" style="left:215px;top:467px;width:66px;text-align:right;font-size:14px;color:#000">128,43</div>
<div class="t" style="left:284px;top:467px;width:66px;text-align:right;font-size:14px;color:#000">125,36</div>
<div class="t" style="left:353px;top:467px;width:66px;text-align:right;font-size:14px;color:#000">127,76</div>
<div class="t" style="left:422px;top:467px;width:66px;text-align:right;font-size:14px;color:#000">142,61</div>
<div class="t" style="left:491px;top:467px;width:66px;text-align:right;font-size:14px;color:#000">144,46</div>
<div class="t" style="left:762px;top:468.5px;width:64px;text-align:right;font-size:13px;color:#000">128430</div>
<div class="t" style="left:829px;top:468.5px;width:64px;text-align:right;font-size:13px;color:#000">125360</div>
<div class="t" style="left:896px;top:468.5px;width:64px;text-align:right;font-size:13px;color:#000">127760</div>
<div class="t" style="left:963px;top:468.5px;width:64px;text-align:right;font-size:13px;color:#000">142610</div>
<div class="t" style="left:1030px;top:468.5px;width:64px;text-align:right;font-size:13px;color:#000">144460</div>
<div class="t" style="left:49px;top:492px;font-size:13.3px;color:#000;transform:scaleY(1.13);transform-origin:0 12px">DKI JAKARTA</div>
<div class="t" style="left:215px;top:491px;width:66px;text-align:right;font-size:14px;color:#000">393,13</div>
<div class="t" style="left:284px;top:491px;width:66px;text-align:right;font-size:14px;color:#000">372,26</div>
<div class="t" style="left:353px;top:491px;width:66px;text-align:right;font-size:14px;color:#000">362,3</div>
<div class="t" style="left:422px;top:491px;width:66px;text-align:right;font-size:14px;color:#000">496,84</div>
<div class="t" style="left:491px;top:491px;width:66px;text-align:right;font-size:14px;color:#000">501,92</div>
<div class="t" style="left:762px;top:492.5px;width:64px;text-align:right;font-size:13px;color:#000">393130</div>
<div class="t" style="left:829px;top:492.5px;width:64px;text-align:right;font-size:13px;color:#000">372260</div>
<div class="t" style="left:896px;top:492.5px;width:64px;text-align:right;font-size:13px;color:#000">362300</div>
<div class="t" style="left:963px;top:492.5px;width:64px;text-align:right;font-size:13px;color:#000">496840</div>
<div class="t" style="left:1030px;top:492.5px;width:64px;text-align:right;font-size:13px;color:#000">501920</div>
<div class="t" style="left:49px;top:516px;font-size:13.3px;color:#000;transform:scaleY(1.13);transform-origin:0 12px">JAWA BARAT</div>
<div class="t" style="left:215px;top:515px;width:66px;text-align:right;font-size:14px;color:#000">3774,41</div>
<div class="t" style="left:284px;top:515px;width:66px;text-align:right;font-size:14px;color:#000">3539,4</div>
<div class="t" style="left:353px;top:515px;width:66px;text-align:right;font-size:14px;color:#000">3375,89</div>
<div class="t" style="left:422px;top:515px;width:66px;text-align:right;font-size:14px;color:#000">4188,52</div>
<div class="t" style="left:491px;top:515px;width:66px;text-align:right;font-size:14px;color:#000">4195,34</div>
<div class="t" style="left:762px;top:516.5px;width:64px;text-align:right;font-size:13px;color:#000">3774410</div>
<div class="t" style="left:829px;top:516.5px;width:64px;text-align:right;font-size:13px;color:#000">3539400</div>
<div class="t" style="left:896px;top:516.5px;width:64px;text-align:right;font-size:13px;color:#000">3375890</div>
<div class="t" style="left:963px;top:516.5px;width:64px;text-align:right;font-size:13px;color:#000">4188520</div>
<div class="t" style="left:1030px;top:516.5px;width:64px;text-align:right;font-size:13px;color:#000">4195340</div>
<div class="t" style="left:49px;top:540px;font-size:13.3px;color:#000;transform:scaleY(1.13);transform-origin:0 12px">JAWA TENGAH</div>
<div class="t" style="left:215px;top:539px;width:66px;text-align:right;font-size:14px;color:#000">4197,49</div>
<div class="t" style="left:284px;top:539px;width:66px;text-align:right;font-size:14px;color:#000">3867,42</div>
<div class="t" style="left:353px;top:539px;width:66px;text-align:right;font-size:14px;color:#000">3679,4</div>
<div class="t" style="left:422px;top:539px;width:66px;text-align:right;font-size:14px;color:#000">4119,93</div>
<div class="t" style="left:491px;top:539px;width:66px;text-align:right;font-size:14px;color:#000">4109,75</div>
<div class="t" style="left:762px;top:540.5px;width:64px;text-align:right;font-size:13px;color:#000">4197490</div>
<div class="t" style="left:829px;top:540.5px;width:64px;text-align:right;font-size:13px;color:#000">3867420</div>
<div class="t" style="left:896px;top:540.5px;width:64px;text-align:right;font-size:13px;color:#000">3679400</div>
<div class="t" style="left:963px;top:540.5px;width:64px;text-align:right;font-size:13px;color:#000">4119930</div>
<div class="t" style="left:1030px;top:540.5px;width:64px;text-align:right;font-size:13px;color:#000">4109750</div>
<div class="t" style="left:49px;top:564px;font-size:13.3px;color:#000;transform:scaleY(1.13);transform-origin:0 12px">DI YOGYAKARTA</div>
<div class="t" style="left:215px;top:563px;width:66px;text-align:right;font-size:14px;color:#000">466,33</div>
<div class="t" style="left:284px;top:563px;width:66px;text-align:right;font-size:14px;color:#000">450,25</div>
<div class="t" style="left:353px;top:563px;width:66px;text-align:right;font-size:14px;color:#000">440,89</div>
<div class="t" style="left:422px;top:563px;width:66px;text-align:right;font-size:14px;color:#000">503,14</div>
<div class="t" style="left:491px;top:563px;width:66px;text-align:right;font-size:14px;color:#000">506,45</div>
<div class="t" style="left:762px;top:564.5px;width:64px;text-align:right;font-size:13px;color:#000">466330</div>
<div class="t" style="left:829px;top:564.5px;width:64px;text-align:right;font-size:13px;color:#000">450250</div>
<div class="t" style="left:896px;top:564.5px;width:64px;text-align:right;font-size:13px;color:#000">440890</div>
<div class="t" style="left:963px;top:564.5px;width:64px;text-align:right;font-size:13px;color:#000">503140</div>
<div class="t" style="left:1030px;top:564.5px;width:64px;text-align:right;font-size:13px;color:#000">506450</div>
<div class="t" style="left:49px;top:588px;font-size:13.3px;color:#000;transform:scaleY(1.13);transform-origin:0 12px">JAWA TIMUR</div>
<div class="t" style="left:215px;top:587px;width:66px;text-align:right;font-size:14px;color:#000">4405,27</div>
<div class="t" style="left:284px;top:587px;width:66px;text-align:right;font-size:14px;color:#000">4292,15</div>
<div class="t" style="left:353px;top:587px;width:66px;text-align:right;font-size:14px;color:#000">4056</div>
<div class="t" style="left:422px;top:587px;width:66px;text-align:right;font-size:14px;color:#000">4585,97</div>
<div class="t" style="left:491px;top:587px;width:66px;text-align:right;font-size:14px;color:#000">4572,73</div>
<div class="t" style="left:762px;top:588.5px;width:64px;text-align:right;font-size:13px;color:#000">4405270</div>
<div class="t" style="left:829px;top:588.5px;width:64px;text-align:right;font-size:13px;color:#000">4292150</div>
<div class="t" style="left:896px;top:588.5px;width:64px;text-align:right;font-size:13px;color:#000">4056000</div>
<div class="t" style="left:963px;top:588.5px;width:64px;text-align:right;font-size:13px;color:#000">4585970</div>
<div class="t" style="left:1030px;top:588.5px;width:64px;text-align:right;font-size:13px;color:#000">4572730</div>
<div class="t" style="left:49px;top:612px;font-size:13.3px;color:#000;transform:scaleY(1.13);transform-origin:0 12px">BANTEN</div>
<div class="t" style="left:215px;top:611px;width:66px;text-align:right;font-size:14px;color:#000">699,83</div>
<div class="t" style="left:284px;top:611px;width:66px;text-align:right;font-size:14px;color:#000">668,74</div>
<div class="t" style="left:353px;top:611px;width:66px;text-align:right;font-size:14px;color:#000">641,42</div>
<div class="t" style="left:422px;top:611px;width:66px;text-align:right;font-size:14px;color:#000">857,64</div>
<div class="t" style="left:491px;top:611px;width:66px;text-align:right;font-size:14px;color:#000">867,23</div>
<div class="t" style="left:762px;top:612.5px;width:64px;text-align:right;font-size:13px;color:#000">699830</div>
<div class="t" style="left:829px;top:612.5px;width:64px;text-align:right;font-size:13px;color:#000">668740</div>
<div class="t" style="left:896px;top:612.5px;width:64px;text-align:right;font-size:13px;color:#000">641420</div>
<div class="t" style="left:963px;top:612.5px;width:64px;text-align:right;font-size:13px;color:#000">857640</div>
<div class="t" style="left:1030px;top:612.5px;width:64px;text-align:right;font-size:13px;color:#000">867230</div>
<div class="t" style="left:49px;top:636px;font-size:13.3px;color:#000;transform:scaleY(1.13);transform-origin:0 12px">BALI</div>
<div class="t" style="left:215px;top:635px;width:66px;text-align:right;font-size:14px;color:#000">176,48</div>
<div class="t" style="left:284px;top:635px;width:66px;text-align:right;font-size:14px;color:#000">168,34</div>
<div class="t" style="left:353px;top:635px;width:66px;text-align:right;font-size:14px;color:#000">156,91</div>
<div class="t" style="left:422px;top:635px;width:66px;text-align:right;font-size:14px;color:#000">196,92</div>
<div class="t" style="left:491px;top:635px;width:66px;text-align:right;font-size:14px;color:#000">201,97</div>
<div class="t" style="left:762px;top:636.5px;width:64px;text-align:right;font-size:13px;color:#000">176480</div>
<div class="t" style="left:829px;top:636.5px;width:64px;text-align:right;font-size:13px;color:#000">168340</div>
<div class="t" style="left:896px;top:636.5px;width:64px;text-align:right;font-size:13px;color:#000">156910</div>
<div class="t" style="left:963px;top:636.5px;width:64px;text-align:right;font-size:13px;color:#000">196920</div>
<div class="t" style="left:1030px;top:636.5px;width:64px;text-align:right;font-size:13px;color:#000">201970</div>
<div class="t" style="left:49px;top:660px;font-size:13.3px;color:#000;transform:scaleY(1.13);transform-origin:0 12px">NUSA TENGGARA BARAT</div>
<div class="t" style="left:215px;top:659px;width:66px;text-align:right;font-size:14px;color:#000">748,12</div>
<div class="t" style="left:284px;top:659px;width:66px;text-align:right;font-size:14px;color:#000">735,62</div>
<div class="t" style="left:353px;top:659px;width:66px;text-align:right;font-size:14px;color:#000">705,68</div>
<div class="t" style="left:422px;top:659px;width:66px;text-align:right;font-size:14px;color:#000">746,04</div>
<div class="t" style="left:491px;top:659px;width:66px;text-align:right;font-size:14px;color:#000">746,66</div>
<div class="t" style="left:762px;top:660.5px;width:64px;text-align:right;font-size:13px;color:#000">748120</div>
<div class="t" style="left:829px;top:660.5px;width:64px;text-align:right;font-size:13px;color:#000">735620</div>
<div class="t" style="left:896px;top:660.5px;width:64px;text-align:right;font-size:13px;color:#000">705680</div>
<div class="t" style="left:963px;top:660.5px;width:64px;text-align:right;font-size:13px;color:#000">746040</div>
<div class="t" style="left:1030px;top:660.5px;width:64px;text-align:right;font-size:13px;color:#000">746660</div>
<div class="a" style="left:214px;top:245px;width:1px;height:431px;background:#93c47d"></div>
<div class="a" style="left:214px;top:245px;width:348px;height:1px;background:#93c47d"></div>
<div class="a" style="left:561px;top:245px;width:1px;height:431px;background:#93c47d"></div>
<div class="a" style="left:215px;top:246px;width:1px;height:430px;background:#1a73e8"></div>
<div class="a" style="left:215px;top:246px;width:346px;height:1px;background:#1a73e8"></div>
<div class="a" style="left:560px;top:246px;width:1px;height:430px;background:#1a73e8"></div>
<div class="a" style="left:215px;top:246px;width:70px;height:25px;border:2px solid #1a73e8"></div>
<div class="a" style="left:1298px;top:199px;width:12px;height:477px;background:#fff;border-left:1px solid #e2e3e3"></div>
<div class="a" style="left:1301px;top:224px;width:8px;height:25px;border-radius:4px;background:#dadce0"></div>
<div class="a" style="left:1298px;top:644px;width:12px;height:33px;background:#fff;border-left:1px solid #e2e3e3;border-top:1px solid #e2e3e3"></div>
<div class="a" style="left:1298px;top:659px;width:12px;height:1px;background:#e2e3e3"></div>
<svg style="left:1302px;top:650px" width="5" height="3"><path d="M0 3H5L2.5 0Z" fill="#8f8f8f"/></svg>
<svg style="left:1302px;top:667px" width="5" height="3"><path d="M0 0H5L2.5 3Z" fill="#8f8f8f"/></svg>
<div class="a" style="left:0;top:677px;width:1310px;height:11px;background:#fff"></div>
<div class="a" style="left:0;top:677px;width:45px;height:11px;background:#f8f9fa;border-right:1px solid #e2e3e3"></div>
<div class="a" style="left:47px;top:678px;width:643px;height:9px;border-radius:5px;background:#dadce0"></div>
<div class="a" style="left:1266px;top:677px;width:44px;height:11px;background:#f8f9fa;border-left:1px solid #e2e3e3"></div>
<div class="a" style="left:1282px;top:677px;width:1px;height:11px;background:#e2e3e3"></div>
<div class="a" style="left:1298px;top:677px;width:1px;height:11px;background:#e2e3e3"></div>
<svg style="left:1272px;top:680px" width="3" height="5"><path d="M3 0V5L0 2.5Z" fill="#8f8f8f"/></svg>
<svg style="left:1289px;top:680px" width="3" height="5"><path d="M0 0V5L3 2.5Z" fill="#8f8f8f"/></svg>
<div class="a" style="left:0;top:688px;width:1310px;height:40px;background:#f1f3f4;border-top:1px solid #e2e3e3"></div>
<svg style="left:51px;top:702px" width="10" height="10"><path d="M5 0V10M0 5H10" stroke="#5f6368" stroke-width="1.9"/></svg>
<svg style="left:81px;top:702px" width="12" height="11"><path d="M0 1H12M0 4H12M0 7H12M0 10H12" stroke="#5f6368" stroke-width="1.8"/></svg>
<div class="a" style="left:107px;top:689px;width:5px;height:39px;background:linear-gradient(90deg,#dadce0,#eceef0)"></div>
<div class="a" style="left:279px;top:689px;width:1px;height:39px;background:#e3e5e8"></div>
<div class="a" style="left:467px;top:689px;width:1px;height:39px;background:#e3e5e8"></div>
<div class="a" style="left:714px;top:689px;width:1px;height:39px;background:#e3e5e8"></div>
<div class="a" style="left:886px;top:689px;width:1px;height:39px;background:#e3e5e8"></div>
<div class="t" style="left:126px;top:698px;font-size:15px;-webkit-text-stroke:0.2px #5f6368;color:#5f6368">Pivot Table PMDN</div>
<svg style="left:255px;top:706px" width="8" height="4"><path d="M0 0H8L4 4Z" fill="#5f6368"/></svg>
<div class="t" style="left:296px;top:698px;font-size:15px;-webkit-text-stroke:0.2px #5f6368;color:#5f6368">Kemiskinan Original</div>
<svg style="left:442px;top:706px" width="8" height="4"><path d="M0 0H8L4 4Z" fill="#5f6368"/></svg>
<div class="t" style="left:483px;top:698px;font-size:15px;-webkit-text-stroke:0.2px #5f6368;color:#5f6368">Duplikat Kemiskinan Original</div>
<svg style="left:690px;top:706px" width="8" height="4"><path d="M0 0H8L4 4Z" fill="#5f6368"/></svg>
<div class="a" style="left:715px;top:688px;width:171px;height:40px;background:#fff"></div>
<div class="t" style="left:731px;top:698px;font-size:15px;-webkit-text-stroke:0.2px #188038;color:#188038">Kemiskinan Clean</div>
<svg style="left:861px;top:706px" width="8" height="4"><path d="M0 0H8L4 4Z" fill="#188038"/></svg>
<div class="t" style="left:902px;top:698px;width:74px;overflow:hidden;font-size:15px;-webkit-text-stroke:0.2px #5f6368;color:#5f6368">Kemiskinan Original</div>
<div class="a" style="left:976px;top:688px;width:4px;height:40px;background:linear-gradient(90deg,#dadce0,#f1f3f4)"></div>
<svg style="left:992px;top:701px" width="6" height="10"><path d="M6 0V10L0 5Z" fill="#5f6368"/></svg>
<svg style="left:1023px;top:701px" width="6" height="10"><path d="M0 0V10L6 5Z" fill="#5f6368"/></svg>
<div class="a" style="left:1075px;top:694px;width:121px;height:30px;background:#fff;border:1px solid #dadce0;border-radius:4px"></div>
<div class="t" style="left:1081px;top:702px;font-size:11px;color:#202124">Jumlah: 264271,81</div>
<svg style="left:1181px;top:707px" width="8" height="4"><path d="M0 0H8L4 4Z" fill="#5f6368"/></svg>
<div class="a" style="left:1206px;top:688px;width:104px;height:40px;background:#f8f9fa;border-left:1px solid #dadce0"></div>
<svg style="left:1219px;top:699px" width="18" height="21" viewBox="0 0 18 21"><rect width="18" height="18" rx="2" fill="#188038"/><path d="M7 18H11L9 20.5Z" fill="#188038"/><path d="M9 3.5C9.5 7 11 8.5 14.5 9C11 9.5 9.5 11 9 14.5C8.5 11 7 9.5 3.5 9C7 8.5 8.5 7 9 3.5Z" fill="#fff"/></svg>
<div class="t" style="left:1250px;top:701px;font-size:12.2px;color:#188038">Pelajari</div>
<svg style="left:1334px;top:695px" width="8" height="11"><path d="M1 1L6.5 5.5L1 10" stroke="#5f6368" stroke-width="1.8" fill="none"/></svg>
<svg style="left:1330px;top:155px" width="18" height="18" viewBox="0 0 18 18"><path d="M2 0H16A2 2 0 0 1 18 2V14H14V4H4V14H0V2A2 2 0 0 1 2 0Z" fill="#4285f4"/><rect x="14" y="3.5" width="4" height="10.5" fill="#fbbc04"/><path d="M0 14H14V18H2A2 2 0 0 1 0 16Z" fill="#34a853"/><path d="M14 14H18L14 18Z" fill="#ea4335"/><rect x="4" y="4" width="10" height="10" fill="#fff"/><text x="9" y="12.3" font-family="Liberation Sans" font-size="7.8" fill="#4285f4" text-anchor="middle" letter-spacing="-0.3">31</text></svg>
<svg style="left:1329px;top:210px" width="19" height="19" viewBox="0 0 19 19"><rect width="19" height="19" rx="2" fill="#fbbc04"/><circle cx="9.5" cy="8" r="3.6" fill="#fff"/><rect x="7.8" y="11" width="3.4" height="2.6" fill="#fff"/></svg>
<svg style="left:1331px;top:267px" width="18" height="18" viewBox="0 0 18 18"><circle cx="8.5" cy="9.5" r="6.8" stroke="#1a73e8" stroke-width="2.6" fill="none"/><path d="M5.3 9.2L8 11.8L16 3" stroke="#1a73e8" stroke-width="2.6" fill="none"/></svg>
<div class="a" style="left:1329px;top:320px;width:20px;height:1px;background:#dadce0"></div>
<svg style="left:1333px;top:359px" width="12" height="12"><path d="M6 0V12M0 6H12" stroke="#5f6368" stroke-width="1.6"/></svg>
<div class="a" style="left:427px;top:154px;width:512px;height:492px;background:#fff;border-radius:8px;box-shadow:0 4px 8px 3px rgba(60,64,67,.15),0 1px 3px rgba(60,64,67,.3)"></div>
<div class="t" style="left:451px;top:179px;font-size:22.5px;letter-spacing:-0.2px;color:#202124">Cari dan ganti</div>
<svg style="left:893px;top:185px" width="12" height="12"><path d="M0.7 0.7L11.3 11.3M11.3 0.7L0.7 11.3" stroke="#5f6368" stroke-width="1.7"/></svg>
<div class="t" style="left:454px;top:242px;font-size:14px;color:#3c4043">Cari</div>
<div class="a" style="left:548px;top:233px;width:280px;height:36px;border:1px solid #dadce0;border-radius:4px"></div>
<div class="t" style="left:557px;top:242px;font-size:14px;color:#202124">.</div>
<div class="t" style="left:454px;top:298px;font-size:14px;color:#3c4043">Ganti dengan</div>
<div class="a" style="left:548px;top:290px;width:280px;height:35px;border:2px solid #1a73e8;border-radius:4px"></div>
<div class="t" style="left:556px;top:298px;font-size:14px;color:#202124">,</div>
<div class="t" style="left:454px;top:355px;font-size:14px;color:#3c4043">Telusuri</div>
<div class="a" style="left:548px;top:345px;width:138px;height:37px;border:1px solid #dadce0;border-radius:4px"></div>
<div class="t" style="left:558px;top:355px;font-size:14px;color:#3c4043">Rentang tertentu</div>
<svg style="left:668px;top:362px" width="9" height="5"><path d="M0 0H9L4.5 4.5Z" fill="#5f6368"/></svg>
<div class="a" style="left:694px;top:345px;width:150px;height:36px;border:1px solid #dadce0;border-radius:4px"></div>
<div class="t" style="left:703px;top:354px;width:98px;overflow:hidden;font-size:14px;color:#3c4043">'Kemiskinan Clean'!B2:F36</div>
<svg style="left:816px;top:354px" width="16" height="15" viewBox="0 0 16 15"><rect x="1" y="1" width="14" height="13" stroke="#5f6368" stroke-width="1.8" fill="none"/><path d="M8 1V14M1 7.5H15" stroke="#5f6368" stroke-width="1.6"/></svg>
<div class="a" style="left:549px;top:404px;width:18px;height:18px;border:2px solid #5f6368;border-radius:2px"></div>
<div class="t" style="left:580px;top:405px;font-size:14px;color:#3c4043">Cocokkan huruf besar/kecil</div>
<div class="a" style="left:549px;top:442px;width:18px;height:18px;border:2px solid #5f6368;border-radius:2px"></div>
<div class="t" style="left:580px;top:443px;font-size:14px;color:#3c4043">Cocokkan seluruh isi sel</div>
<div class="a" style="left:549px;top:480px;width:18px;height:18px;border:2px solid #5f6368;border-radius:2px"></div>
<div class="t" style="left:580px;top:481px;font-size:14px;color:#3c4043">Telusuri menggunakan ekspresi reguler</div>
<div class="a" style="left:549px;top:518px;width:18px;height:18px;border:2px solid #5f6368;border-radius:2px"></div>
<div class="t" style="left:580px;top:519px;font-size:14px;color:#3c4043">Telusuri juga dalam formula</div>
<div class="t" style="left:832px;top:481px;font-size:14px;color:#1a73e8">Bantuan</div>
<div class="a" style="left:482px;top:586px;width:78px;height:36px;border:1px solid #dadce0;border-radius:4px"></div>
<div class="t" style="left:482px;top:595px;width:78px;text-align:center;font-size:14px;font-weight:bold;color:#188038">Cari</div>
<div class="a" style="left:572px;top:586px;width:87px;height:36px;border:1px solid #f1f3f4;border-radius:4px"></div>
<div class="t" style="left:572px;top:595px;width:87px;text-align:center;font-size:14px;font-weight:bold;color:#bdc1c6">Ganti</div>
<div class="a" style="left:671px;top:586px;width:135px;height:36px;border:1px solid #ceead6;border-radius:4px;background:#f6fbf7"></div>
<div class="t" style="left:671px;top:595px;width:135px;text-align:center;font-size:14px;font-weight:bold;color:#188038">Ganti semua</div>
<div class="a" style="left:818px;top:586px;width:97px;height:36px;border-radius:4px;background:#188038"></div>
<div class="t" style="left:818px;top:595px;width:97px;text-align:center;font-size:14px;font-weight:bold;color:#fff">Selesai</div>
</body></html>
